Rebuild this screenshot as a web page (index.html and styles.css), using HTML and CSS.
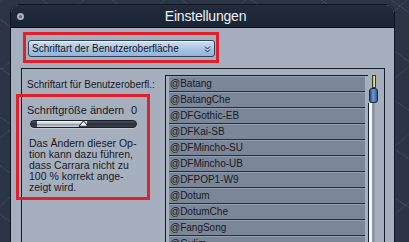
FILE: index.html
```html
<!DOCTYPE html>
<html lang="de">
<head>
<meta charset="utf-8">
<link rel="stylesheet" href="styles.css">
</head>
<body>
<div class="window">
  <div class="titlebar">
    <span class="dot"></span>
    <span class="title">Einstellungen</span>
    <span></span>
  </div>
  <div class="content">
    <div class="select">
      <span>Schriftart der Benutzeroberfläche</span>
      <svg class="chev" width="7" height="7" viewBox="0 0 7 7"><path d="M1 0.5 L3.5 3 L6 0.5 M1 3.5 L3.5 6 L6 3.5" fill="none" stroke="#1c2a3c" stroke-width="1"/></svg>
    </div>
    <div class="panel">
      <div class="leftcol">
        <div class="label1">Schriftart für Benutzeroberfl.:</div>
        <div class="sizerow"><span>Schriftgröße ändern</span><span>0</span></div>
        <div class="slider">
          <div class="fill"></div>
          <svg class="thumb" width="11" height="7" viewBox="0 0 11 7"><path d="M5.5 0.8 L10 6.3 L1 6.3 Z" fill="#f4f6f8" stroke="#1a1f28" stroke-width="1"/></svg>
        </div>
        <p class="note">Das Ändern dieser Op-<br>tion kann dazu führen,<br>dass Carrara nicht zu<br>100 % korrekt ange-<br>zeigt wird.</p>
      </div>
      <div class="list">
        <div class="row">@Batang</div>
        <div class="row">@BatangChe</div>
        <div class="row">@DFGothic-EB</div>
        <div class="row">@DFKai-SB</div>
        <div class="row">@DFMincho-SU</div>
        <div class="row">@DFMincho-UB</div>
        <div class="row">@DFPOP1-W9</div>
        <div class="row">@Dotum</div>
        <div class="row">@DotumChe</div>
        <div class="row">@FangSong</div>
        <div class="row">@Gulim</div>
      </div>
      <div class="scroll">
        <div class="yellow"></div>
        <div class="sthumb"></div>
        <div class="track"></div>
      </div>
    </div>
    <div class="mark mark1"></div>
    <div class="mark mark2"></div>
  </div>
</div>
</body>
</html>
```
FILE: styles.css
```css
* { box-sizing: border-box; }
html, body { margin: 0; padding: 0; }
body {
  width: 409px;
  height: 242px;
  overflow: hidden;
  background-color: #2c3545;
  background-image:
    repeating-linear-gradient(35deg, transparent 0 22px, rgba(120,135,160,0.18) 22px 23px, transparent 23px 40px),
    repeating-linear-gradient(-40deg, transparent 0 30px, rgba(120,135,160,0.14) 30px 31px, transparent 31px 52px);
  font-family: "Liberation Sans", Arial, sans-serif;
  color: #16191f;
}
.window {
  margin: 4px 0 0 10px;
  width: 385px;
  height: 238px;
  border: 1px solid #0f1520;
  border-bottom: none;
  border-radius: 9px 9px 0 0;
  overflow: hidden;
  background: #a6afbe;
  display: flex;
  flex-direction: column;
}
.titlebar {
  height: 23px;
  flex: none;
  background: linear-gradient(#222c3c, #1b2434);
  border-bottom: 1px solid #0c111b;
  display: grid;
  grid-template-columns: 1fr auto 1fr;
  align-items: center;
  padding-left: 6px;
}
.dot {
  width: 7px;
  height: 7px;
  border-radius: 50%;
  border: 2px solid #aab3bf;
  background: #5a6474;
}
.title {
  color: #eef1f5;
  font-size: 14px;
  line-height: 22px;
  letter-spacing: -0.2px;
}
.content {
  position: relative;
  flex: 1;
  padding-top: 12px;
}
.select {
  margin-left: 17px;
  width: 187px;
  height: 17px;
  border: 1px solid #2d425e;
  border-radius: 3px;
  background: linear-gradient(#cfe0f1, #a9c4e2 55%, #93b3d8);
  box-shadow: inset 0 1px 0 rgba(255,255,255,0.6);
  display: flex;
  align-items: center;
  justify-content: space-between;
  padding: 0 3px 0 3px;
  font-size: 10px;
  line-height: 14px;
  color: #10161f;
}
.chev { margin-top: 1px; }
.panel {
  margin: 11px 0 0 10px;
  width: 364px;
  height: 200px;
  border: 1px solid #161c28;
  border-bottom: none;
  display: flex;
  align-items: flex-start;
}
.leftcol {
  width: 143px;
  flex: none;
  padding-left: 5px;
}
.label1 {
  font-size: 10px;
  line-height: 12px;
  margin-top: 10px;
  white-space: nowrap;
}
.sizerow {
  margin-top: 13px;
  width: 110px;
  display: flex;
  justify-content: space-between;
  font-size: 11px;
  line-height: 13px;
  white-space: nowrap;
}
.slider {
  position: relative;
  margin: 3px 0 0 3px;
  width: 107px;
  height: 8px;
  border-radius: 4px;
  border: 1px solid #1b1f27;
  background: linear-gradient(#4a5260, #2a3039 50%, #3c434f);
  box-shadow: 0 1px 0 rgba(255,255,255,0.35);
}
.fill {
  margin-left: 6px;
  width: 50px;
  height: 6px;
  background: linear-gradient(#fafbfc, #c2c9d2 45%, #8d96a3 55%, #d6dbe1);
}
.thumb {
  position: absolute;
  left: 47px;
  top: -1px;
}
.note {
  margin: 10px 0 0 2px;
  font-size: 10.5px;
  line-height: 11px;
  white-space: nowrap;
}
.list {
  width: 203px;
  flex: none;
  margin-top: 6px;
  border-left: 1px solid #161c28;
  border-top: 1px solid #161c28;
  padding: 0 3px;
  height: 200px;
}
.row {
  height: 16px;
  background: #7c8699;
  border-bottom: 1px solid #262d3b;
  box-shadow: inset 0 1px 0 rgba(190,200,215,0.35);
  font-size: 10px;
  line-height: 16px;
  padding-left: 1px;
  color: #161a22;
  white-space: nowrap;
}
.scroll {
  width: 10px;
  flex: none;
  margin-top: 6px;
  display: flex;
  flex-direction: column;
  align-items: center;
  height: 200px;
}
.yellow {
  width: 4px;
  height: 13px;
  margin-left: 1px;
  background: linear-gradient(90deg, #9a9a4a, #f4f1a8 50%, #c9c76a);
  border: 1px solid #3c3c28;
}
.sthumb {
  width: 9px;
  height: 15px;
  border-radius: 3px;
  background: linear-gradient(90deg, #2a4a78, #6f9bd3 45%, #365a8c);
  border: 1px solid #15253d;
}
.track {
  width: 7px;
  flex: 1;
  margin-right: 3px;
  border-left: 1px solid #161c28;
  background: linear-gradient(90deg, #f2f4f6 0 3px, #8e96a2 3px 6px, #a6afbe 6px);
}
.mark {
  position: absolute;
  border: 3px solid #e0202a;
}
.mark1 {
  left: 12px;
  top: 4px;
  width: 196px;
  height: 31px;
}
.mark2 {
  left: 5px;
  top: 66px;
  width: 134px;
  height: 106px;
}
```
